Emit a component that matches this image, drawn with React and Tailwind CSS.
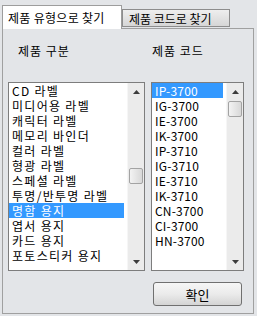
import React from "react";

const leftItems = [
  "CD 라벨",
  "미디어용 라벨",
  "캐릭터 라벨",
  "메모리 바인더",
  "컬러 라벨",
  "형광 라벨",
  "스페셜 라벨",
  "투명/반투명 라벨",
  "명함 용지",
  "엽서 용지",
  "카드 용지",
  "포토스티커 용지",
];
const rightItems = [
  "IP-3700",
  "IG-3700",
  "IE-3700",
  "IK-3700",
  "IP-3710",
  "IG-3710",
  "IE-3710",
  "IK-3710",
  "CN-3700",
  "CI-3700",
  "HN-3700",
];

function Arrow({ up }) {
  return (
    <svg width="7" height="4" viewBox="0 0 7 4">
      {up ? <path d="M0 4 L3.5 0 L7 4 Z" fill="#3c3c3c" /> : <path d="M0 0 L3.5 4 L7 0 Z" fill="#3c3c3c" />}
    </svg>
  );
}

function ScrollBar({ offset }) {
  return (
    <div className="flex flex-col w-[17px] bg-[#ebebeb] border-l border-[#f6f6f6]">
      <div className="h-[17px] flex items-center justify-center">
        <Arrow up />
      </div>
      <div style={{ height: offset }} />
      <div className="h-[16px] mx-[1px] rounded-[2px] border border-[#a3a3a3] bg-gradient-to-r from-[#f3f3f3] to-[#d8d8d8]" />
      <div className="flex-1" />
      <div className="h-[17px] flex items-center justify-center">
        <Arrow />
      </div>
    </div>
  );
}

function ListBox({ items, selected, width, offset, tracking }) {
  return (
    <div className={`flex h-[189px] border border-[#7d7d7d] bg-white ${width}`}>
      <div className="flex-1 flex flex-col pr-[3px]">
        {items.map((t, i) => (
          <div
            key={t}
            className={`h-[15px] leading-[15px] pl-[3px] whitespace-nowrap overflow-hidden ${tracking} ${
              i === selected ? "bg-[#3399ff] text-white" : "text-black"
            }`}
          >
            {t}
          </div>
        ))}
      </div>
      <ScrollBar offset={offset} />
    </div>
  );
}

export default function App() {
  return (
    <div
      className="w-[257px] h-[316px] bg-[#e3e5e8] text-[12px] text-black flex flex-col px-[2px] pt-[5px]"
      style={{ fontFamily: '"Noto Sans CJK KR", "Noto Sans", sans-serif' }}
    >
      <div className="flex items-start h-[24px] relative z-10">
        <div className="w-[120px] h-[24px] bg-white border border-b-0 border-[#9d9d9d] flex items-center pl-[5px] leading-[15px] tracking-[0.3px]">
          제품 유형으로 찾기
        </div>
        <div className="mt-[4px] w-[108px] h-[18px] bg-gradient-to-b from-[#eeeeee] to-[#d6d6d6] border border-[#8d8d8d] flex items-center pl-[6px] leading-[15px]">
          제품 코드로 찾기
        </div>
      </div>
      <div className="-mt-px w-[252px] h-[286px] border border-[#a0a0a0] flex flex-col">
        <div className="flex mt-[14px] h-[15px] leading-[15px] tracking-[1px]">
          <div className="ml-[15px] w-[134px]">제품 구분</div>
          <div>제품 코드</div>
        </div>
        <div className="flex mt-[24px] pl-[5px] gap-[6px]">
          <ListBox items={leftItems} selected={8} width="w-[137px]" offset={68} tracking="tracking-[1.3px]" />
          <ListBox items={rightItems} selected={0} width="w-[93px]" offset={1} tracking="tracking-[0.2px]" />
        </div>
        <div className="flex mt-[11px] pl-[150px]">
          <button className="w-[89px] h-[24px] rounded-[3px] border border-[#707070] bg-gradient-to-b from-[#f6f6f6] via-[#ebebeb] to-[#d4d4d4] flex items-center justify-center leading-[15px] text-[13px] text-black">
            확인
          </button>
        </div>
      </div>
    </div>
  );
}
